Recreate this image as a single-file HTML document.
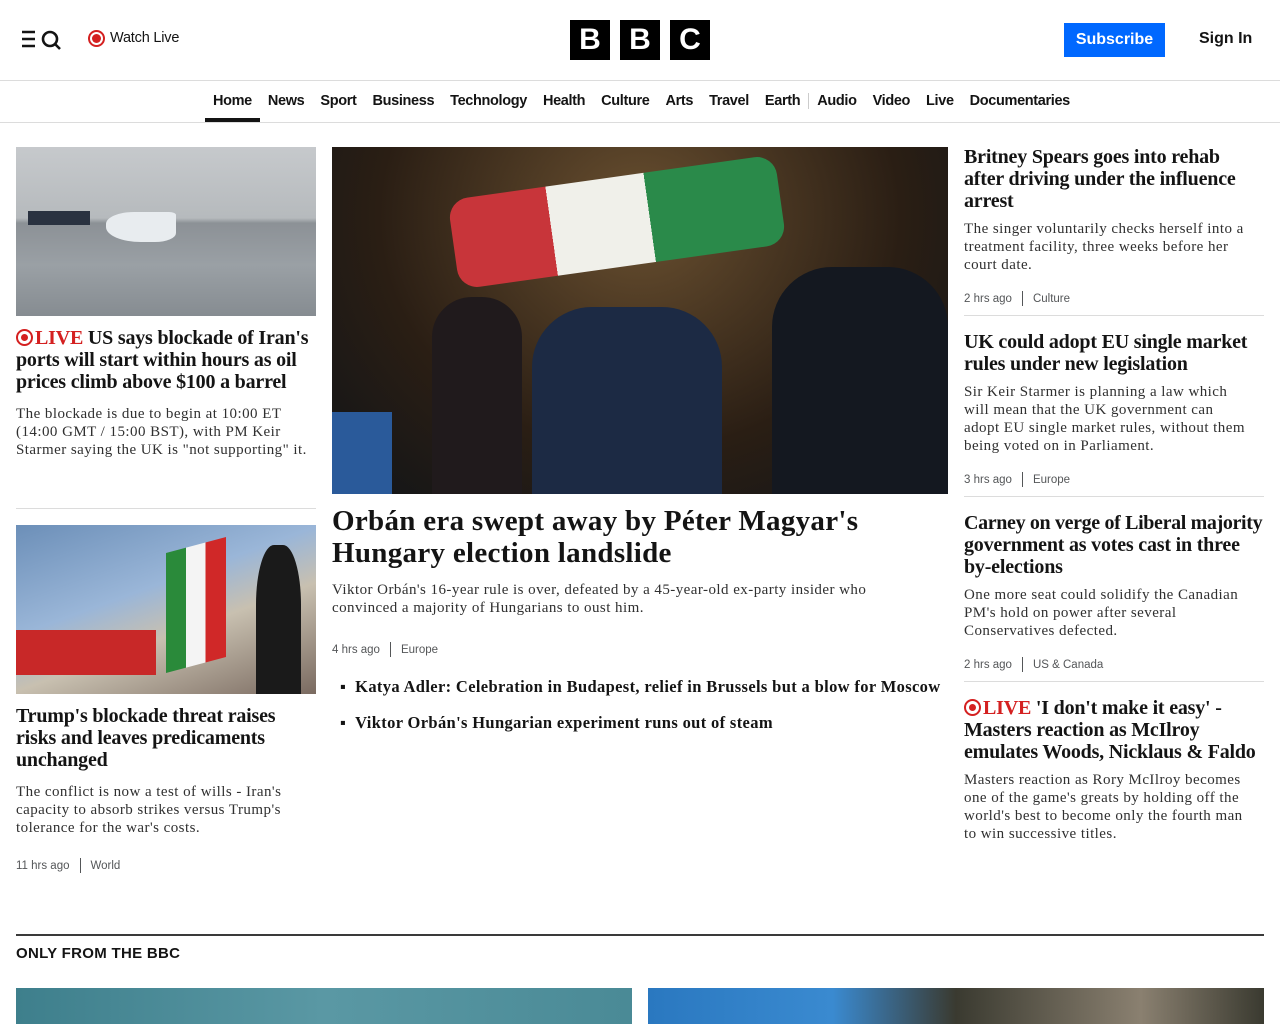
<!DOCTYPE html>
<html><head><meta charset="utf-8"><style>
*{margin:0;padding:0;box-sizing:border-box}
body{width:1280px;height:1024px;overflow:hidden;background:#fff;font-family:"Liberation Sans",sans-serif;color:#141414;position:relative}
.a{position:absolute}
.h{font-family:"Liberation Serif",serif;font-weight:bold;font-size:20px;line-height:22px;color:#141414;letter-spacing:-0.2px;white-space:nowrap}
.s{font-family:"Liberation Serif",serif;font-size:15px;line-height:18px;color:#303030;letter-spacing:0.45px;white-space:nowrap}
.m{font-size:11.5px;color:#545658;display:flex;align-items:center}
.m i{display:inline-block;width:1px;height:15px;background:#545658;margin:0 10px}
.live{color:#d42020}
.dot{display:inline-block;width:17px;height:17px;border:2px solid #d42020;border-radius:50%;position:relative;vertical-align:-2px;margin-right:2px}
.dot:after{content:"";position:absolute;left:3px;top:3px;width:7px;height:7px;border-radius:50%;background:#d42020}
.hr{position:absolute;height:1px;background:#dcdcdc}
nav span{margin:0 8px}
</style></head><body>
<svg class="a" style="left:22px;top:29px" width="40" height="22" viewBox="0 0 40 22"><path d="M0 3h13M0 10h13M0 17h13" stroke="#141414" stroke-width="2.4"/><circle cx="28" cy="10" r="7" fill="none" stroke="#141414" stroke-width="2.6"/><path d="M33 15l5 5" stroke="#141414" stroke-width="2.6"/></svg>
<div class="a" style="left:88px;top:30px;width:17px;height:17px;border:2px solid #d42020;border-radius:50%"><div style="margin:2px;width:9px;height:9px;border-radius:50%;background:#d42020"></div></div>
<div class="a" style="left:110px;top:30px;font-size:14.5px;letter-spacing:-0.2px">Watch Live</div>
<div class="a" style="left:570px;top:20px;display:flex;gap:10px">
<div style="width:40px;height:40px;background:#000;color:#fff;font:bold 30px/40px 'Liberation Sans';text-align:center">B</div>
<div style="width:40px;height:40px;background:#000;color:#fff;font:bold 30px/40px 'Liberation Sans';text-align:center">B</div>
<div style="width:40px;height:40px;background:#000;color:#fff;font:bold 30px/40px 'Liberation Sans';text-align:center">C</div></div>
<div class="a" style="left:1064px;top:23px;width:101px;height:34px;background:#0068ff;color:#fff;font-size:16px;font-weight:bold;text-align:center;line-height:34px">Subscribe</div>
<div class="a" style="left:1199px;top:30px;font-size:16px;font-weight:bold">Sign In</div>
<div class="hr" style="left:0;top:80px;width:1280px"></div>
<nav class="a" style="left:205px;top:93px;font-size:14.5px;font-weight:bold;letter-spacing:-0.35px;white-space:nowrap;color:#141414">
<span style="margin-left:8px">Home</span><span>News</span><span>Sport</span><span>Business</span><span>Technology</span><span>Health</span><span>Culture</span><span>Arts</span><span>Travel</span><span>Earth</span><span style="border-left:1px solid #ccc;padding-left:8px;margin-left:0">Audio</span><span>Video</span><span>Live</span><span>Documentaries</span></nav>
<div class="a" style="left:205px;top:118px;width:55px;height:4px;background:#141414"></div>
<div class="hr" style="left:0;top:122px;width:1280px"></div>

<div class="a" style="left:16px;top:147px;width:300px;height:169px;background:linear-gradient(#c6c9cc 0%,#b6babd 42%,#8c9196 45%,#9aa0a5 70%,#868c91 100%)">
<div class="a" style="left:12px;top:64px;width:62px;height:14px;background:#2a3240"></div>
<div class="a" style="left:90px;top:65px;width:70px;height:30px;background:#e8ecef;border-radius:40% 10% 30% 50%"></div></div>
<div class="a h" style="left:16px;top:327px"><span class="live"><span class="dot"></span>LIVE</span> US says blockade of Iran's<br>ports will start within hours as oil<br>prices climb above $100 a barrel</div>
<div class="a s" style="left:16px;top:405px">The blockade is due to begin at 10:00 ET<br>(14:00 GMT / 15:00 BST), with PM Keir<br>Starmer saying the UK is "not supporting" it.</div>
<div class="hr" style="left:16px;top:508px;width:300px"></div>
<div class="a" style="left:16px;top:525px;width:300px;height:169px;background:linear-gradient(160deg,#6c8fb8,#9ab6d8 40%,#c8c0b0 60%,#7a6a60)">
<div class="a" style="left:0;top:105px;width:140px;height:45px;background:#c82828"></div>
<div class="a" style="left:150px;top:20px;width:60px;height:120px;background:linear-gradient(90deg,#2a8a3a 33%,#f4f4f4 33% 66%,#d02828 66%);transform:skewY(-15deg)"></div>
<div class="a" style="left:240px;top:20px;width:45px;height:149px;background:#1a1a1a;border-radius:40% 40% 0 0"></div></div>
<div class="a h" style="left:16px;top:705px">Trump's blockade threat raises<br>risks and leaves predicaments<br>unchanged</div>
<div class="a s" style="left:16px;top:783px">The conflict is now a test of wills - Iran's<br>capacity to absorb strikes versus Trump's<br>tolerance for the war's costs.</div>
<div class="a m" style="left:16px;top:858px">11 hrs ago<i></i>World</div>

<div class="a" style="left:332px;top:147px;width:616px;height:347px;background:radial-gradient(ellipse at 50% 20%,#6a5030,#2a1e14 60%,#101418)">
<div class="a" style="left:120px;top:30px;width:330px;height:90px;background:linear-gradient(90deg,#c8353a 30%,#f0f0ea 30% 60%,#2a8a4a 60%);transform:rotate(-8deg);border-radius:20px"></div>
<div class="a" style="left:200px;top:160px;width:190px;height:187px;background:#1c2a44;border-radius:60px 60px 0 0"></div>
<div class="a" style="left:440px;top:120px;width:176px;height:227px;background:#141820;border-radius:60px 60px 0 0"></div>
<div class="a" style="left:100px;top:150px;width:90px;height:197px;background:#201a1c;border-radius:40px 40px 0 0"></div>
<div class="a" style="left:0;top:265px;width:60px;height:82px;background:#2a5a9a"></div></div>
<div class="a" style="left:332px;top:505px;width:616px;font-family:'Liberation Serif',serif;font-weight:bold;font-size:29px;line-height:32px;letter-spacing:0.3px">Orbán era swept away by Péter Magyar's<br>Hungary election landslide</div>
<div class="a s" style="left:332px;top:581px">Viktor Orbán's 16-year rule is over, defeated by a 45-year-old ex-party insider who<br>convinced a majority of Hungarians to oust him.</div>
<div class="a m" style="left:332px;top:642px">4 hrs ago<i></i>Europe</div>
<div class="a" style="left:340px;top:676px;font-family:'Liberation Serif',serif;font-weight:bold;font-size:16.5px;line-height:22px;letter-spacing:0.35px;white-space:nowrap">
<div>▪&nbsp;&nbsp;Katya Adler: Celebration in Budapest, relief in Brussels but a blow for Moscow</div>
<div style="margin-top:14px">▪&nbsp;&nbsp;Viktor Orbán's Hungarian experiment runs out of steam</div></div>

<div class="a h" style="left:964px;top:146px">Britney Spears goes into rehab<br>after driving under the influence<br>arrest</div>
<div class="a s" style="left:964px;top:220px">The singer voluntarily checks herself into a<br>treatment facility, three weeks before her<br>court date.</div>
<div class="a m" style="left:964px;top:291px">2 hrs ago<i></i>Culture</div>
<div class="hr" style="left:964px;top:315px;width:300px"></div>
<div class="a h" style="left:964px;top:331px">UK could adopt EU single market<br>rules under new legislation</div>
<div class="a s" style="left:964px;top:383px">Sir Keir Starmer is planning a law which<br>will mean that the UK government can<br>adopt EU single market rules, without them<br>being voted on in Parliament.</div>
<div class="a m" style="left:964px;top:472px">3 hrs ago<i></i>Europe</div>
<div class="hr" style="left:964px;top:496px;width:300px"></div>
<div class="a h" style="left:964px;top:512px"><span style="letter-spacing:-0.35px">Carney on verge of Liberal majority</span><br>government as votes cast in three<br>by-elections</div>
<div class="a s" style="left:964px;top:586px">One more seat could solidify the Canadian<br>PM's hold on power after several<br>Conservatives defected.</div>
<div class="a m" style="left:964px;top:657px">2 hrs ago<i></i>US &amp; Canada</div>
<div class="hr" style="left:964px;top:681px;width:300px"></div>
<div class="a h" style="left:964px;top:697px"><span class="live"><span class="dot"></span>LIVE</span> 'I don't make it easy' -<br>Masters reaction as McIlroy<br>emulates Woods, Nicklaus &amp; Faldo</div>
<div class="a s" style="left:964px;top:771px">Masters reaction as Rory McIlroy becomes<br>one of the game's greats by holding off the<br>world's best to become only the fourth man<br>to win successive titles.</div>

<div class="a" style="left:16px;top:934px;width:1248px;height:2px;background:#3a3a3a"></div>
<div class="a" style="left:16px;top:945px;font-size:15px;font-weight:bold;letter-spacing:0.3px">ONLY FROM THE BBC</div>
<div class="a" style="left:16px;top:988px;width:616px;height:36px;background:linear-gradient(90deg,#3e7f8c,#5a98a4 50%,#4a8a96)"></div>
<div class="a" style="left:648px;top:988px;width:616px;height:36px;background:linear-gradient(90deg,#2a78c0,#3a8ad0 30%,#3a3a30 50%,#8a8070 80%,#3a3a30)"></div>
</body></html>
